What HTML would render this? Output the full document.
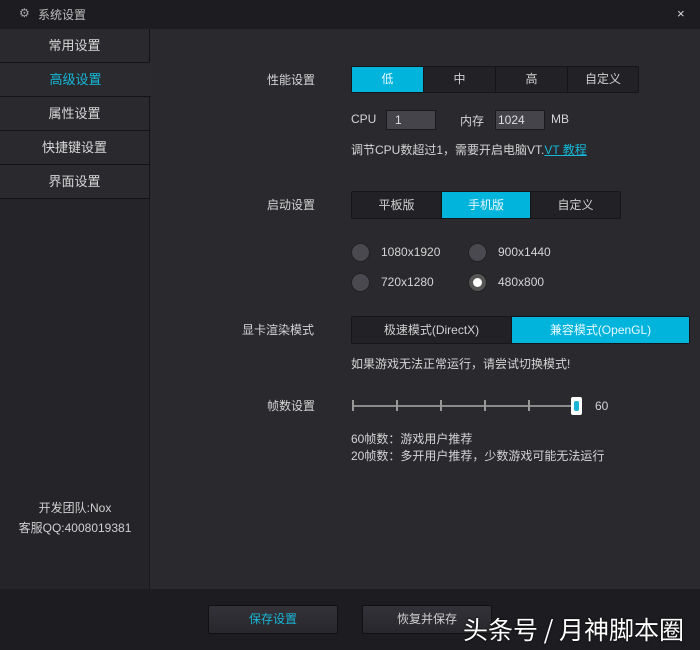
<!DOCTYPE html>
<html><head><meta charset="utf-8"><style>
*{margin:0;padding:0;box-sizing:border-box}
body{width:700px;height:650px;background:#2a292e;font-family:"Liberation Sans","Noto Sans CJK SC",sans-serif;font-size:12px;color:#cfcfcf;position:relative;overflow:hidden}
.a{position:absolute}
#title{left:0;top:0;width:700px;height:29px;background:#1d1c21}
#side{left:0;top:29px;width:150px;height:560px;background:#252429;border-right:1px solid #1b1a1e}
.nav{position:absolute;left:0;width:150px;height:34px;line-height:33px;text-align:center;font-size:13px;color:#d8d8d8;background:#2a292e;border-bottom:1px solid #141317;border-right:1px solid #141317}
.nav.on{color:#14b8d8;background:#2b2a2f;border-right:none;width:151px}
#foot{left:0;top:589px;width:700px;height:61px;background:#1d1c21}
.seg{position:absolute;display:flex;border:1px solid #161519;background:#222126;border-radius:2px}
.seg div{text-align:center;border-right:1px solid #151418;color:#d0d0d0;font-size:12px}
.seg div:last-child{border-right:none}
.seg .on{background:#00b4dc;color:#e8f8ff}
.lbl{position:absolute;font-size:12px;color:#d4d4d4}
.inp{position:absolute;height:20px;background:#45444b;border:1px solid #1a191d;color:#ddd;padding-left:8px;line-height:18px;font-size:12px}
.rad{position:absolute;width:19px;height:19px;border-radius:50%;background:#4a494f;border:1px solid #222}
.btn{position:absolute;height:29px;width:130px;background:linear-gradient(#333238,#28272c);border:1px solid #111;border-radius:2px;text-align:center;line-height:27px;font-size:12px}
</style></head><body>
<div id="title" class="a"><span class="a" style="left:19px;top:6px;color:#aaa;font-size:12px">⚙</span><span class="a" style="left:38px;top:6px;color:#bdbdbd;font-size:12px">系统设置</span><span class="a" style="left:677px;top:6px;color:#ddd;font-size:13px">×</span></div>
<div id="side" class="a">
<div class="nav" style="top:0">常用设置</div>
<div class="nav on" style="top:34px">高级设置</div>
<div class="nav" style="top:68px">属性设置</div>
<div class="nav" style="top:102px">快捷键设置</div>
<div class="nav" style="top:136px">界面设置</div>
<div class="a" style="left:0;top:469px;width:150px;text-align:center;font-size:12px;color:#d0d0d0;line-height:20px">开发团队:Nox<br>客服QQ:4008019381</div>
</div>
<div id="foot" class="a"></div>

<div class="lbl" style="left:267px;top:71px">性能设置</div>
<div class="seg" style="left:351px;top:66px;height:27px;width:288px;line-height:25px"><div class="on" style="width:72px">低</div><div style="width:72px">中</div><div style="width:72px">高</div><div style="width:70px">自定义</div></div>
<div class="lbl" style="left:351px;top:112px">CPU</div>
<div class="inp" style="left:386px;top:110px;width:50px">1</div>
<div class="lbl" style="left:460px;top:112px">内存</div>
<div class="inp" style="left:495px;top:110px;width:50px;padding-left:2px">1024</div>
<div class="lbl" style="left:551px;top:112px">MB</div>
<div class="lbl" style="left:351px;top:141px">调节CPU数超过1，需要开启电脑VT.<span style="color:#14b8d8;text-decoration:underline">VT 教程</span></div>

<div class="lbl" style="left:267px;top:196px">启动设置</div>
<div class="seg" style="left:351px;top:191px;height:28px;width:270px;line-height:26px"><div style="width:90px">平板版</div><div class="on" style="width:89px">手机版</div><div style="width:89px">自定义</div></div>
<div class="rad" style="left:351px;top:243px"></div><div class="lbl" style="left:381px;top:245px">1080x1920</div>
<div class="rad" style="left:468px;top:243px"></div><div class="lbl" style="left:498px;top:245px">900x1440</div>
<div class="rad" style="left:351px;top:273px"></div><div class="lbl" style="left:381px;top:275px">720x1280</div>
<div class="rad" style="left:468px;top:273px;background:#555"><div class="a" style="left:4px;top:4px;width:9px;height:9px;border-radius:50%;background:#fff"></div></div><div class="lbl" style="left:498px;top:275px">480x800</div>

<div class="lbl" style="left:242px;top:321px">显卡渲染模式</div>
<div class="seg" style="left:351px;top:316px;height:28px;width:339px;line-height:26px"><div style="width:160px">极速模式(DirectX)</div><div class="on" style="width:177px">兼容模式(OpenGL)</div></div>
<div class="lbl" style="left:351px;top:355px">如果游戏无法正常运行，请尝试切换模式!</div>

<div class="lbl" style="left:267px;top:397px">帧数设置</div>
<div class="a" style="left:352px;top:405px;width:224px;height:2px;background:#8a8a8a"></div>
<div class="a" style="left:352px;top:400px;width:2px;height:11px;background:#999"></div>
<div class="a" style="left:396px;top:400px;width:2px;height:11px;background:#999"></div>
<div class="a" style="left:440px;top:400px;width:2px;height:11px;background:#999"></div>
<div class="a" style="left:484px;top:400px;width:2px;height:11px;background:#999"></div>
<div class="a" style="left:528px;top:400px;width:2px;height:11px;background:#999"></div>
<div class="a" style="left:571px;top:397px;width:11px;height:18px;background:#fff;border-radius:2px"><div class="a" style="left:3px;top:4px;width:5px;height:10px;background:#1ab4d4;border-radius:2px"></div></div>
<div class="lbl" style="left:595px;top:399px">60</div>
<div class="lbl" style="left:351px;top:431px;line-height:17px">60帧数：游戏用户推荐<br>20帧数：多开用户推荐，少数游戏可能无法运行</div>

<div class="btn" style="left:208px;top:605px;color:#19b6d6">保存设置</div>
<div class="btn" style="left:362px;top:605px;color:#cfcfcf">恢复并保存</div>
<div class="a" style="left:463px;top:611px;font-size:25px;color:#fff;font-family:'Noto Sans CJK SC',sans-serif;text-shadow:0 0 2px #000;white-space:nowrap">头条号 / 月神脚本圈</div>
</body></html>
